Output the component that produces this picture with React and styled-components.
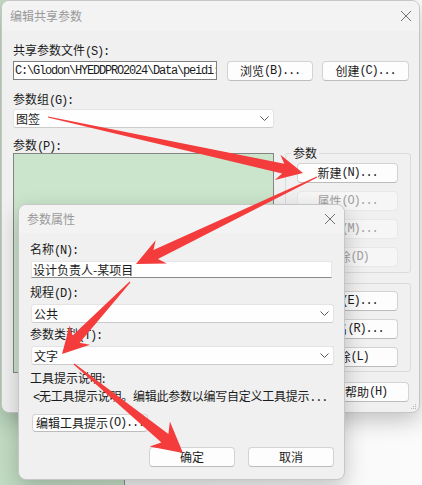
import React from "react";
import styled, { createGlobalStyle } from "styled-components";

const GlobalStyle = createGlobalStyle`
  html, body { margin: 0; padding: 0; }
  body {
    font-family: "Noto Sans CJK SC", "Noto Sans", sans-serif;
    font-size: 12px;
    color: #1b1b1b;
  }
`;

const Desktop = styled.div`
  position: relative;
  width: 422px;
  height: 485px;
  overflow: hidden;
  background: linear-gradient(
    to right,
    #c1dcc2 0,
    #c7e1c8 124px,
    #8e8e8e 124px,
    #8e8e8e 125px,
    #f4f4f4 125px,
    #fbfbfb 100%
  );
`;

const Window = styled.div`
  position: absolute;
  left: ${(p) => p.$x}px;
  top: ${(p) => p.$y}px;
  width: ${(p) => p.$w}px;
  height: ${(p) => p.$h}px;
  box-sizing: border-box;
  display: flex;
  flex-direction: column;
  background: #f0f0f0;
  border: 1px solid #c6c6c6;
  border-radius: 8px;
  box-shadow: 0 8px 22px rgba(0, 0, 0, 0.22);
  overflow: hidden;
`;

const TitleBar = styled.div`
  flex: none;
  height: ${(p) => p.$h}px;
  display: flex;
  align-items: center;
  justify-content: space-between;
  padding: 0 ${(p) => p.$pr}px 0 ${(p) => p.$pl}px;
  background: #f3f3f3;
  color: #9a9a9a;
  line-height: 16px;
`;

const Body = styled.div`
  flex: 1;
  display: flex;
  flex-direction: column;
  align-items: flex-start;
  padding: ${(p) => p.$pad};
`;

const Label = styled.div`
  height: 16px;
  line-height: 16px;
  margin-top: ${(p) => p.$mt || 0}px;
  margin-left: ${(p) => p.$ml || 0}px;
  letter-spacing: ${(p) => (p.$tight ? "-0.25px" : "normal")};
  white-space: nowrap;
`;

const Key = styled.span`
  font-family: "Liberation Mono", monospace;
  letter-spacing: -1.2px;
`;

const Row = styled.div`
  display: flex;
  align-items: flex-start;
  gap: ${(p) => p.$gap}px;
  margin-top: ${(p) => p.$mt || 0}px;
  margin-left: ${(p) => p.$ml || 0}px;
  align-self: ${(p) => (p.$end ? "stretch" : "auto")};
  justify-content: ${(p) => (p.$end ? "flex-end" : "flex-start")};
  padding-right: ${(p) => p.$pr || 0}px;
`;

const TextBox = styled.div`
  box-sizing: border-box;
  width: ${(p) => p.$w}px;
  height: ${(p) => p.$h}px;
  margin-top: ${(p) => p.$mt || 0}px;
  margin-left: ${(p) => p.$ml || 0}px;
  display: flex;
  align-items: center;
  padding-left: 1px;
  background: #fff;
  border: 1px solid ${(p) => (p.$classic ? "#7f7f7f" : "#e6e6e6")};
  border-bottom-color: ${(p) => (p.$classic ? "#7f7f7f" : "#8a8a8a")};
  overflow: hidden;
  white-space: nowrap;
`;

const Dropdown = styled.div`
  box-sizing: border-box;
  width: ${(p) => p.$w}px;
  height: 19px;
  margin-top: ${(p) => p.$mt || 0}px;
  margin-left: ${(p) => p.$ml || 0}px;
  display: flex;
  align-items: center;
  justify-content: space-between;
  padding: 0 4px 0 2px;
  background: #fefefe;
  border: 1px solid #e4e4e4;
  border-bottom-color: #cbcbcb;
  border-radius: 3px;
  white-space: nowrap;
`;

const Button = styled.button`
  box-sizing: border-box;
  flex: none;
  width: ${(p) => p.$w}px;
  height: ${(p) => p.$h || 20}px;
  margin: ${(p) => p.$mt || 0}px 0 0 ${(p) => p.$ml || 0}px;
  padding: 0;
  display: flex;
  align-items: center;
  justify-content: center;
  font-family: "Noto Sans CJK SC", "Noto Sans", sans-serif;
  font-size: 12px;
  line-height: 16px;
  white-space: nowrap;
  color: ${(p) => (p.disabled ? "#a0a0a0" : "#1b1b1b")};
  background: ${(p) => (p.disabled ? "#f6f6f6" : "#fdfdfd")};
  border: 1px solid ${(p) => (p.disabled ? "#e8e8e8" : "#d3d3d3")};
  border-bottom-color: ${(p) => (p.disabled ? "#e8e8e8" : "#bcbcbc")};
  border-radius: 4px;
`;

const Lower = styled.div`
  display: grid;
  grid-template-columns: 261px 126px;
  column-gap: 11px;
  margin-top: 9px;
`;

const Column = styled.div`
  display: flex;
  flex-direction: column;
  padding-top: ${(p) => p.$pt || 0}px;
`;

const ParamList = styled.div`
  box-sizing: border-box;
  height: 220px;
  background: #cae5cc;
  border: 1px solid #848484;
`;

const Group = styled.fieldset`
  box-sizing: border-box;
  margin: ${(p) => p.$mt || 0}px 0 0;
  padding: ${(p) => p.$pt}px 12px ${(p) => p.$pb}px 11px;
  min-width: 0;
  display: flex;
  flex-direction: column;
  gap: 8px;
  border: 1px solid #dadada;
  border-radius: 3px;
`;

const Legend = styled.legend`
  margin-left: -6px;
  padding: 0 2px;
  line-height: 16px;
`;

const Grip = styled.svg`
  position: absolute;
  right: 2px;
  bottom: 2px;
`;

const Overlay = styled.svg`
  position: absolute;
  left: 0;
  top: 0;
  pointer-events: none;
`;

const Close = () => (
  <svg width="12" height="12" viewBox="0 0 12 12">
    <path d="M1 1 L11 11 M11 1 L1 11" stroke="#707070" strokeWidth="1" />
  </svg>
);

const Chevron = () => (
  <svg width="9" height="5" viewBox="0 0 9 5">
    <path d="M0.5 0.5 L4.5 4.5 L8.5 0.5" fill="none" stroke="#5a5a5a" strokeWidth="1" />
  </svg>
);

// tapered arrow: thin tail, widening shaft, barbed head
const arrowPoints = (tail, tip, head, wing, neck) => {
  const dx = tip[0] - tail[0];
  const dy = tip[1] - tail[1];
  const len = Math.hypot(dx, dy);
  const ux = dx / len;
  const uy = dy / len;
  const nx = -uy;
  const ny = ux;
  const base = [tip[0] - ux * head, tip[1] - uy * head];
  const notch = [tip[0] - ux * head * 0.78, tip[1] - uy * head * 0.78];
  const pts = [
    [tail[0] + nx * 0.6, tail[1] + ny * 0.6],
    [notch[0] + nx * neck, notch[1] + ny * neck],
    [base[0] + nx * wing, base[1] + ny * wing],
    tip,
    [base[0] - nx * wing, base[1] - ny * wing],
    [notch[0] - nx * neck, notch[1] - ny * neck],
    [tail[0] - nx * 0.6, tail[1] - ny * 0.6],
  ];
  return pts.map((p) => p.map((v) => v.toFixed(1)).join(",")).join(" ");
};

const arrows = [
  { tail: [48, 117], tip: [303, 173], head: 26, wing: 13, neck: 5 },
  { tail: [317, 177], tip: [136, 264], head: 28, wing: 13, neck: 5 },
  { tail: [130, 282], tip: [62, 354], head: 26, wing: 14, neck: 5 },
  { tail: [74, 364], tip: [183, 453], head: 30, wing: 16, neck: 5.5 },
];

export default function App() {
  return (
    <>
      <GlobalStyle />
      <Desktop>
        <Window $x={1} $y={0} $w={419} $h={413}>
          <TitleBar $h={30} $pl={8} $pr={7}>
            <span>编辑共享参数</span>
            <Close />
          </TitleBar>
          <Body $pad="11px 8px 0 11px">
            <Label>
              共享参数文件<Key>(S):</Key>
            </Label>
            <Row $gap={10} $mt={3}>
              <TextBox $w={204} $h={19} $classic>
                <Key>C:\Glodon\HYEDDPRO2024\Data\peidi:</Key>
              </TextBox>
              <Button $w={86}>
                浏览<Key>(B)...</Key>
              </Button>
              <Button $w={87} $ml={-1}>
                创建<Key>(C)...</Key>
              </Button>
            </Row>
            <Label $mt={10}>
              参数组<Key>(G):</Key>
            </Label>
            <Dropdown $w={261} $mt={2}>
              <span>图签</span>
              <Chevron />
            </Dropdown>
            <Lower>
              <Column>
                <Label>
                  参数<Key>(P):</Key>
                </Label>
                <ParamList />
              </Column>
              <Column $pt={8}>
                <Group $pt={2} $pb={5}>
                  <Legend>参数</Legend>
                  <Button $w={101}>
                    新建<Key>(N)...</Key>
                  </Button>
                  <Button $w={101} disabled>
                    属性<Key>(O)...</Key>
                  </Button>
                  <Button $w={101} disabled>
                    移动<Key>(M)...</Key>
                  </Button>
                  <Button $w={101} disabled>
                    删除<Key>(D)</Key>
                  </Button>
                </Group>
                <Group $mt={2} $pt={0} $pb={4}>
                  <Legend>组</Legend>
                  <Button $w={101}>
                    新建<Key>(E)...</Key>
                  </Button>
                  <Button $w={101}>
                    重命名<Key>(R)...</Key>
                  </Button>
                  <Button $w={101}>
                    删除<Key>(L)</Key>
                  </Button>
                </Group>
              </Column>
            </Lower>
            <Row $gap={10} $mt={9} $end $pr={2}>
              <Button $w={86}>确定</Button>
              <Button $w={86}>取消</Button>
              <Button $w={86}>
                帮助<Key>(H)</Key>
              </Button>
            </Row>
          </Body>
          <Grip width="7" height="7" viewBox="0 0 7 7">
            <g fill="#b5b5b5">
              <rect x="5" y="1" width="1" height="1" />
              <rect x="3" y="3" width="1" height="1" />
              <rect x="5" y="3" width="1" height="1" />
              <rect x="1" y="5" width="1" height="1" />
              <rect x="3" y="5" width="1" height="1" />
              <rect x="5" y="5" width="1" height="1" />
            </g>
          </Grip>
        </Window>

        <Window $x={18} $y={204} $w={327} $h={276}>
          <TitleBar $h={28} $pl={8} $pr={8}>
            <span>参数属性</span>
            <Close />
          </TitleBar>
          <Body $pad="8px 10px 0 11px">
            <Label>
              名称<Key>(N):</Key>
            </Label>
            <TextBox $w={301} $h={17} $mt={4} $ml={1}>
              设计负责人-某项目
            </TextBox>
            <Label $mt={6}>
              规程<Key>(D):</Key>
            </Label>
            <Dropdown $w={303} $mt={4} $ml={1}>
              <span>公共</span>
              <Chevron />
            </Dropdown>
            <Label $mt={3}>
              参数类型<Key>(T):</Key>
            </Label>
            <Dropdown $w={303} $mt={4} $ml={1}>
              <span>文字</span>
              <Chevron />
            </Dropdown>
            <Label $mt={5}>工具提示说明:</Label>
            <Label $mt={2} $ml={3} $tight>
              <Key>&lt;</Key>无工具提示说明。编辑此参数以编写自定义工具提示<Key>...</Key>
            </Label>
            <Button $w={116} $h={18} $mt={10} $ml={2}>
              编辑工具提示<Key>(O)...</Key>
            </Button>
            <Row $gap={13} $mt={15} $end>
              <Button $w={86}>确定</Button>
              <Button $w={86}>取消</Button>
            </Row>
          </Body>
        </Window>

        <Overlay width="422" height="485" viewBox="0 0 422 485">
          {arrows.map((a, i) => (
            <polygon
              key={i}
              points={arrowPoints(a.tail, a.tip, a.head, a.wing, a.neck)}
              fill="#f43c3c"
            />
          ))}
        </Overlay>
      </Desktop>
    </>
  );
}
